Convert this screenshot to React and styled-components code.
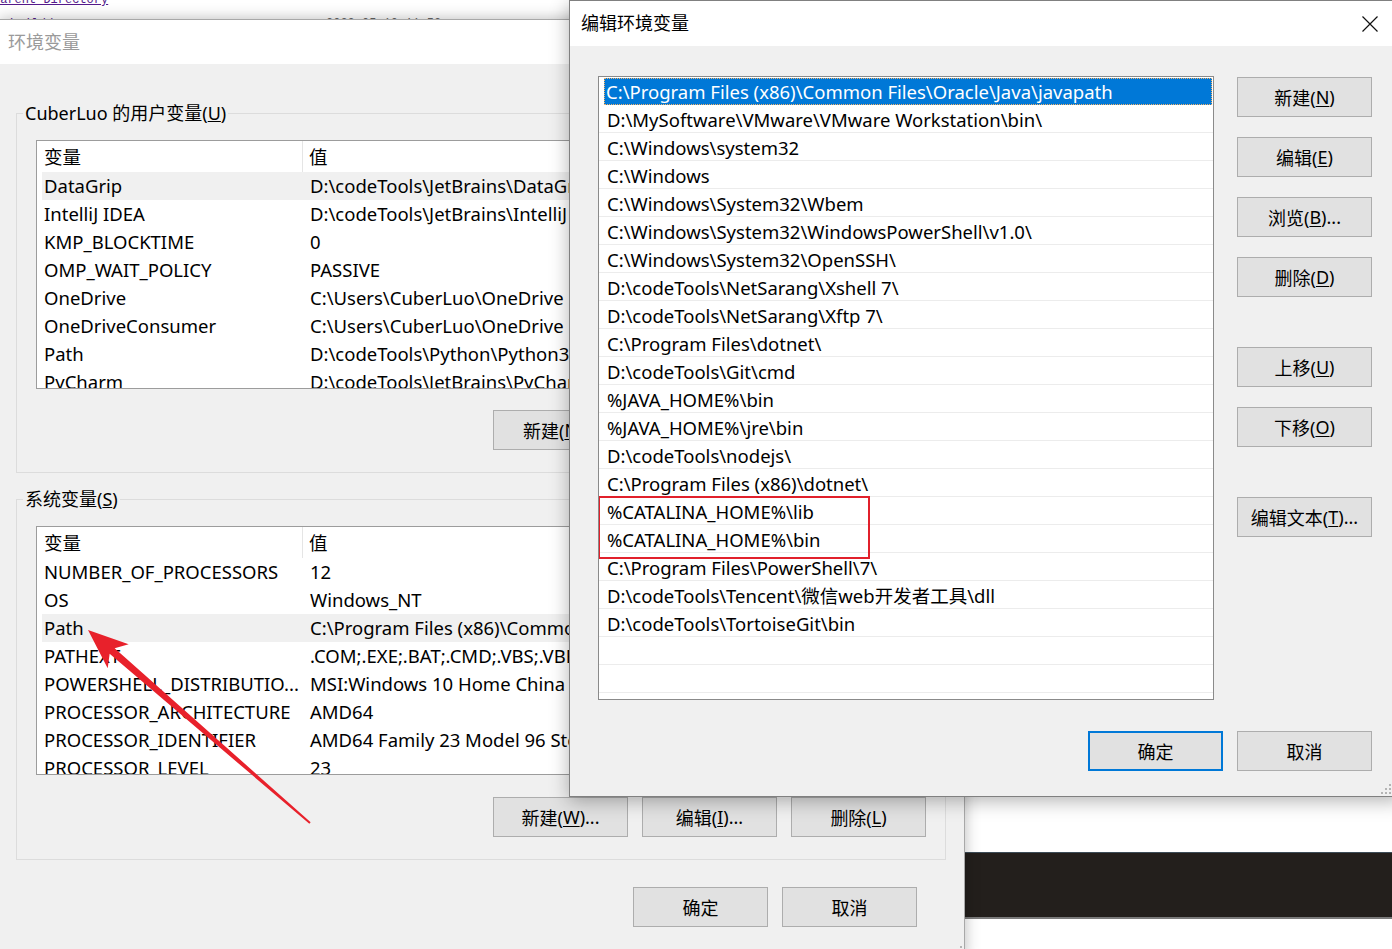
import React from "react";
import styled, { createGlobalStyle, css } from "styled-components";

const Global = createGlobalStyle`
  html, body { margin: 0; padding: 0; }
  body {
    width: 1392px; height: 949px; overflow: hidden; background: #fff;
    font-family: "Noto Sans", "Noto Sans CJK SC", sans-serif;
  }
  #root { width: 1392px; height: 949px; }
`;

const FONT = `"Noto Sans", "Noto Sans CJK SC", sans-serif`;

const Desktop = styled.div`
  position: relative;
  width: 1392px;
  height: 949px;
  overflow: hidden;
  background: #fff;
`;

/* ---------- browser page behind ---------- */
const Page = styled.div`
  display: flex;
  flex-direction: column;
`;
const Listing = styled.div`
  height: 852px;
  display: flex;
  flex-direction: column;
`;
const LinkLine = styled.a`
  display: block;
  margin: -7px 0 0 -7px;
  font: 12px/14px "Liberation Mono", monospace;
  color: #551a8b;
  text-decoration: underline;
`;
const EntryLine = styled.div`
  display: flex;
  margin-top: 10px;
  font: 12px/14px "Liberation Mono", monospace;
`;
const EntryName = styled.span`
  width: 316px;
  padding-left: 10px;
  color: #551a8b;
  text-decoration: underline;
`;
const EntryDate = styled.span`
  color: #666;
`;
const DarkBand = styled.div`
  height: 64px;
  background: #231f1c;
  border-top: 1px solid #3d4c57;
  border-bottom: 2px solid #7a7a7a;
`;

/* ---------- window chrome ---------- */
const BgWindow = styled.div`
  position: absolute;
  left: -1px;
  top: 19px;
  width: 966px;
  height: 940px;
  box-sizing: border-box;
  background: #f0f0f0;
  border: 1px solid #a8a8a8;
  box-shadow: 0 0 14px rgba(0, 0, 0, 0.28);
  font-family: ${FONT};
  font-size: 18px;
  color: #000;
`;
const TitleBar = styled.div`
  height: ${(p) => p.$h}px;
  box-sizing: border-box;
  background: #fff;
  display: flex;
  align-items: center;
  padding-left: ${(p) => p.$pad}px;
  padding-bottom: 3px;
  font-size: 18px;
  color: ${(p) => (p.$inactive ? "#9a9a9a" : "#000")};
`;
const TitleText = styled.span`
  flex: 1;
`;
const CloseBtn = styled.div`
  width: 60px;
  height: 100%;
  margin-right: 1px;
  margin-top: 3px;
  display: flex;
  align-items: center;
  justify-content: center;
`;
const BgBody = styled.div`
  padding: 37px 18px 0 16px;
  display: flex;
  flex-direction: column;
`;
const Group = styled.fieldset`
  margin: ${(p) => p.$mt || 0}px 0 0 0;
  border: 1px solid #dcdcdc;
  padding: 15px 19px 22px 19px;
  min-width: 0;
`;
const Legend = styled.legend`
  margin-left: -13px;
  padding: 0 2px;
  font-size: 18px;
  line-height: 24px;
`;
const ListView = styled.div`
  height: 249px;
  box-sizing: border-box;
  border: 1px solid #9c9c9c;
  background: #fff;
  overflow: hidden;
  font-size: 18.5px;
`;
const Header = styled.div`
  display: grid;
  grid-template-columns: 266px 1fr;
  height: 31px;
  line-height: 31px;
`;
const HeadCell = styled.div`
  padding-left: ${(p) => p.$pl}px;
  ${(p) => p.$divider && css`border-right: 1px solid #e5e5e5;`}
`;
const VarRow = styled.div`
  display: grid;
  grid-template-columns: 261px 1fr;
  height: 28px;
  line-height: 27px;
  margin-left: 5px;
  background: ${(p) => (p.$hl ? "#f0f0f0" : "transparent")};
  white-space: nowrap;
`;
const Cell = styled.div`
  padding-left: ${(p) => p.$pl}px;
  overflow: hidden;
`;
const BtnRow = styled.div`
  display: flex;
  justify-content: flex-end;
  gap: 14px;
  margin-top: ${(p) => p.$mt}px;
  margin-right: ${(p) => p.$mr || 0}px;
`;
const Btn = styled.div`
  width: 135px;
  height: 40px;
  box-sizing: border-box;
  display: flex;
  align-items: center;
  justify-content: center;
  padding-bottom: 1px;
  background: #e1e1e1;
  border: ${(p) => (p.$default ? "2px solid #0078d7" : "1px solid #adadad")};
  font-size: 18px;
  color: #000;
  white-space: nowrap;
  margin-top: ${(p) => p.$mt || 0}px;
  u { text-decoration: underline; text-underline-offset: 2px; }
`;
const Grip = styled.svg`
  position: absolute;
  right: ${(p) => p.$r}px;
  bottom: ${(p) => p.$b}px;
`;

/* ---------- edit dialog ---------- */
const Dialog = styled.div`
  position: absolute;
  left: 569px;
  top: 0;
  width: 833px;
  height: 797px;
  box-sizing: border-box;
  background: #f0f0f0;
  border: 1px solid #808080;
  box-shadow: 0 4px 18px rgba(0, 0, 0, 0.3);
  font-family: ${FONT};
  font-size: 18px;
  color: #000;
`;
const DlgBody = styled.div`
  padding: 30px 28px 0 28px;
  display: grid;
  grid-template-columns: 616px 135px;
  column-gap: 23px;
`;
const PathList = styled.div`
  position: relative;
  height: 624px;
  box-sizing: border-box;
  border: 1px solid #8a8a8a;
  background: #fff;
  overflow: hidden;
  font-size: 18.5px;
`;
const PathRow = styled.div`
  height: 28px;
  box-sizing: border-box;
  padding: 3px 0 0 8px;
  line-height: 24px;
  border-bottom: 1px solid #ececec;
  white-space: nowrap;
  ${(p) =>
    p.$sel &&
    css`
      height: 27px;
      margin: 1px 1px 0 5px;
      padding: 2px 0 0 2px;
      background: #0078d7;
      color: #fff;
      border-bottom: none;
      outline: 1px dotted #f3b36a;
      outline-offset: -1px;
    `}
`;
const Highlight = styled.div`
  position: absolute;
  left: -1px;
  top: 419px;
  width: 272px;
  height: 63px;
  box-sizing: border-box;
  border: 2px solid #e1202b;
`;
const SideCol = styled.div`
  display: flex;
  flex-direction: column;
  gap: 20px;
  padding-top: 1px;
`;
const DlgFooter = styled.div`
  grid-column: 1 / span 2;
  display: flex;
  justify-content: flex-end;
  gap: 14px;
  margin-top: 31px;
`;
const ArrowSvg = styled.svg`
  position: absolute;
  left: 0;
  top: 0;
  pointer-events: none;
`;

const userVars = [
  ["DataGrip", "D:\\codeTools\\JetBrains\\DataGrip 2021.3\\bin;"],
  ["IntelliJ IDEA", "D:\\codeTools\\JetBrains\\IntelliJ IDEA 2021.3\\bin;"],
  ["KMP_BLOCKTIME", "0"],
  ["OMP_WAIT_POLICY", "PASSIVE"],
  ["OneDrive", "C:\\Users\\CuberLuo\\OneDrive"],
  ["OneDriveConsumer", "C:\\Users\\CuberLuo\\OneDrive"],
  ["Path", "D:\\codeTools\\Python\\Python310\\Scripts\\;"],
  ["PyCharm", "D:\\codeTools\\JetBrains\\PyCharm 2021.3\\bin;"],
];

const sysVars = [
  ["NUMBER_OF_PROCESSORS", "12"],
  ["OS", "Windows_NT"],
  ["Path", "C:\\Program Files (x86)\\Common Files\\Oracle\\Java\\javapath;"],
  ["PATHEXT", ".COM;.EXE;.BAT;.CMD;.VBS;.VBE;.JS;.JSE;.WSF;.WSH;.MSC"],
  ["POWERSHELL_DISTRIBUTIO...", "MSI:Windows 10 Home China"],
  ["PROCESSOR_ARCHITECTURE", "AMD64"],
  ["PROCESSOR_IDENTIFIER", "AMD64 Family 23 Model 96 Stepping 1, AuthenticAMD"],
  ["PROCESSOR_LEVEL", "23"],
];

const paths = [
  "C:\\Program Files (x86)\\Common Files\\Oracle\\Java\\javapath",
  "D:\\MySoftware\\VMware\\VMware Workstation\\bin\\",
  "C:\\Windows\\system32",
  "C:\\Windows",
  "C:\\Windows\\System32\\Wbem",
  "C:\\Windows\\System32\\WindowsPowerShell\\v1.0\\",
  "C:\\Windows\\System32\\OpenSSH\\",
  "D:\\codeTools\\NetSarang\\Xshell 7\\",
  "D:\\codeTools\\NetSarang\\Xftp 7\\",
  "C:\\Program Files\\dotnet\\",
  "D:\\codeTools\\Git\\cmd",
  "%JAVA_HOME%\\bin",
  "%JAVA_HOME%\\jre\\bin",
  "D:\\codeTools\\nodejs\\",
  "C:\\Program Files (x86)\\dotnet\\",
  "%CATALINA_HOME%\\lib",
  "%CATALINA_HOME%\\bin",
  "C:\\Program Files\\PowerShell\\7\\",
  "D:\\codeTools\\Tencent\\微信web开发者工具\\dll",
  "D:\\codeTools\\TortoiseGit\\bin",
  "",
  "",
];

function VarList({ rows, hl }) {
  return (
    <ListView>
      <Header>
        <HeadCell $pl={7} $divider>变量</HeadCell>
        <HeadCell $pl={6}>值</HeadCell>
      </Header>
      {rows.map(([k, v], i) => (
        <VarRow key={k + i} $hl={i === hl}>
          <Cell $pl={2}>{k}</Cell>
          <Cell $pl={7}>{v}</Cell>
        </VarRow>
      ))}
    </ListView>
  );
}

function GripDots() {
  const pts = [
    [8, 0], [8, 4], [4, 4], [8, 8], [4, 8], [0, 8],
  ];
  return pts.map(([x, y]) => <rect key={x + "-" + y} x={x} y={y} width="2" height="2" fill="#b4b4b4" />);
}

function Arrow() {
  const T = [88, 630];
  const tail = [310, 823];
  const dx = T[0] - tail[0];
  const dy = T[1] - tail[1];
  const len = Math.hypot(dx, dy);
  const u = [dx / len, dy / len];
  const n = [-u[1], u[0]];
  const pt = (base, a, b) => [base[0] - a * u[0] + b * n[0], base[1] - a * u[1] + b * n[1]];
  const pts = [
    T,
    pt(T, 40, 16),
    pt(T, 32, 3.8),
    pt(tail, 0, 1),
    pt(tail, 0, -1),
    pt(T, 32, -3.8),
    pt(T, 40, -16),
  ];
  return (
    <ArrowSvg width="1392" height="949" viewBox="0 0 1392 949">
      <polygon points={pts.map((p) => p.join(",")).join(" ")} fill="#e8212b" />
    </ArrowSvg>
  );
}

export default function App() {
  return (
    <>
      <Global />
      <Desktop>
        <Page>
          <Listing>
            <LinkLine>Parent Directory</LinkLine>
            <EntryLine>
              <EntryName>build/</EntryName>
              <EntryDate>2022-05-10 11:52&nbsp;&nbsp;&nbsp;&nbsp;-</EntryDate>
            </EntryLine>
          </Listing>
          <DarkBand />
        </Page>

        <BgWindow>
          <TitleBar $h={44} $pad={8} $inactive>
            <TitleText>环境变量</TitleText>
          </TitleBar>
          <BgBody>
            <Group>
              <Legend>CuberLuo 的用户变量(<u>U</u>)</Legend>
              <VarList rows={userVars} hl={0} />
              <BtnRow $mt={21}>
                <Btn>新建(<u>N</u>)...</Btn>
                <Btn>编辑(<u>E</u>)...</Btn>
                <Btn>删除(<u>D</u>)</Btn>
              </BtnRow>
            </Group>
            <Group $mt={14}>
              <Legend>系统变量(<u>S</u>)</Legend>
              <VarList rows={sysVars} hl={2} />
              <BtnRow $mt={22}>
                <Btn>新建(<u>W</u>)...</Btn>
                <Btn>编辑(<u>I</u>)...</Btn>
                <Btn>删除(<u>L</u>)</Btn>
              </BtnRow>
            </Group>
            <BtnRow $mt={27} $mr={29}>
              <Btn>确定</Btn>
              <Btn>取消</Btn>
            </BtnRow>
          </BgBody>
          <Grip $r={2} $b={2} width="10" height="10" viewBox="0 0 10 10">
            <GripDots />
          </Grip>
        </BgWindow>

        <Dialog>
          <TitleBar $h={45} $pad={11}>
            <TitleText>编辑环境变量</TitleText>
            <CloseBtn>
              <svg width="16" height="16" viewBox="0 0 16 16">
                <path d="M0.5 0.5 L15.5 15.5 M15.5 0.5 L0.5 15.5" stroke="#111" strokeWidth="1.2" fill="none" />
              </svg>
            </CloseBtn>
          </TitleBar>
          <DlgBody>
            <PathList>
              {paths.map((p, i) => (
                <PathRow key={i} $sel={i === 0}>{p}</PathRow>
              ))}
              <Highlight />
            </PathList>
            <SideCol>
              <Btn>新建(<u>N</u>)</Btn>
              <Btn>编辑(<u>E</u>)</Btn>
              <Btn>浏览(<u>B</u>)...</Btn>
              <Btn>删除(<u>D</u>)</Btn>
              <Btn $mt={30}>上移(<u>U</u>)</Btn>
              <Btn>下移(<u>O</u>)</Btn>
              <Btn $mt={30}>编辑文本(<u>T</u>)...</Btn>
            </SideCol>
            <DlgFooter>
              <Btn $default>确定</Btn>
              <Btn>取消</Btn>
            </DlgFooter>
          </DlgBody>
          <Grip $r={10} $b={2} width="10" height="10" viewBox="0 0 10 10">
            <GripDots />
          </Grip>
        </Dialog>

        <Arrow />
      </Desktop>
    </>
  );
}
